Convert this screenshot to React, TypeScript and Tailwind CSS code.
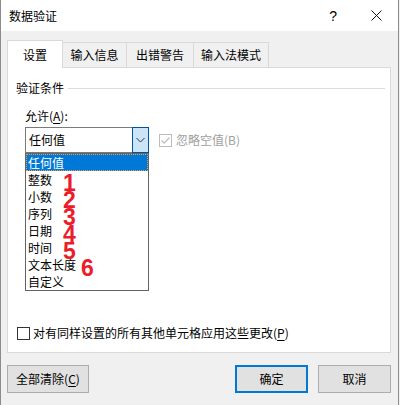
import React from "react";

const items = [
  { label: "任何值", n: "", left: "" },
  { label: "整数", n: "1", left: "left-[37px]" },
  { label: "小数", n: "2", left: "left-[37px]" },
  { label: "序列", n: "3", left: "left-[37px]" },
  { label: "日期", n: "4", left: "left-[37px]" },
  { label: "时间", n: "5", left: "left-[37px]" },
  { label: "文本长度", n: "6", left: "left-[55px]" },
  { label: "自定义", n: "", left: "" },
];

function Check({ disabled }: { disabled?: boolean }) {
  return (
    <div
      className={
        "w-[13px] h-[13px] border bg-white flex items-center justify-center " +
        (disabled ? "border-[#bcbcbc]" : "border-[#333333]")
      }
    >
      {disabled && (
        <svg width="11" height="11" viewBox="0 0 11 11">
          <path d="M1.5 5.5 L4.2 8.2 L9.5 2.5" fill="none" stroke="#bcbcbc" strokeWidth="1.2" />
        </svg>
      )}
    </div>
  );
}

export default function App() {
  return (
    <div className="w-[400px] h-[405px] bg-[#f0f0f0] text-[12px] text-black font-['Noto_Sans_CJK_SC','Noto_Sans',sans-serif]">
      <div className="w-[399px] h-full border-x border-[#8c8c8c] flex flex-col">
        {/* title bar */}
        <div className="h-[31px] bg-white flex items-center pl-[8px] shrink-0">
          <span className="leading-[16px]">数据验证</span>
          <span className="ml-auto mr-[34px] text-[14px] leading-none font-['Liberation_Sans',sans-serif]">?</span>
          <svg width="11" height="11" viewBox="0 0 11 11" className="mr-[16px]">
            <path d="M0.5 0.5 L10.5 10.5 M10.5 0.5 L0.5 10.5" stroke="#111" strokeWidth="1" />
          </svg>
        </div>

        <div className="flex-1 pl-[6px] pt-[9px]">
          {/* tabs */}
          <div className="flex items-end relative z-10 -mb-px">
            <div className="w-[56px] h-[28px] bg-white border-x border-t border-[#d9d9d9] flex items-center justify-center">
              设置
            </div>
            <div className="w-[64px] h-[26px] border-t border-r border-b border-[#d9d9d9] flex items-center justify-center">
              输入信息
            </div>
            <div className="w-[67px] h-[26px] border-t border-r border-b border-[#d9d9d9] flex items-center justify-center">
              出错警告
            </div>
            <div className="w-[75px] h-[26px] border-t border-r border-b border-[#d9d9d9] flex items-center justify-center">
              输入法模式
            </div>
          </div>

          {/* panel */}
          <div className="w-[384px] h-[286px] bg-white border border-[#d9d9d9]">
            <div className="flex items-center h-[16px] mt-[12px] pl-[8px]">
              <span className="leading-[16px]">验证条件</span>
              <div className="flex-1 h-px bg-[#dcdcdc] ml-[4px] mr-[5px]" />
            </div>

            <div className="h-[16px] leading-[16px] mt-[12px] pl-[17px]">
              允许(<span className="underline underline-offset-2">A</span>):
            </div>

            <div className="flex items-center mt-[3px] ml-[17px]">
              <div className="w-[124px] h-[26px] flex">
                <div className="flex-1 border-y border-l border-[#7a7a7a] flex items-center pl-[3px]">
                  任何值
                </div>
                <div className="w-[17px] h-full bg-[#cce4f7] border border-[#005499] flex items-center justify-center">
                  <svg width="9" height="6" viewBox="0 0 9 6">
                    <path d="M0.5 1 L4.5 5 L8.5 1" fill="none" stroke="#333" strokeWidth="1" />
                  </svg>
                </div>
              </div>
              <div className="ml-[10px]">
                <Check disabled />
              </div>
              <span className="ml-[4px] text-[#a0a0a0]">忽略空值(B)</span>
            </div>

            {/* dropdown list */}
            <div className="w-[124px] ml-[17px] border border-[#646464] bg-white">
              {items.map((it, i) => (
                <div
                  key={it.label}
                  className={
                    "relative h-[17px] leading-[17px] pl-[2px] " +
                    (i === 0
                      ? "bg-[#0078d7] text-white outline outline-1 outline-dotted outline-[#f0a040] -outline-offset-1"
                      : "")
                  }
                >
                  {it.label}
                  {it.n && (
                    <span
                      className={
                        "absolute top-[1px] text-[23px] leading-none font-bold text-[#ec1c2a] font-['Liberation_Sans',sans-serif] " +
                        it.left
                      }
                    >
                      {it.n}
                    </span>
                  )}
                </div>
              ))}
            </div>

            <div className="flex items-center mt-[34px] ml-[9px] h-[16px]">
              <Check />
              <span className="ml-[3px] leading-[16px]">
                对有同样设置的所有其他单元格应用这些更改(<span className="underline underline-offset-2">P</span>)
              </span>
            </div>
          </div>

          {/* buttons */}
          <div className="w-[384px] flex mt-[12px]">
            <button className="w-[82px] h-[28px] bg-[#e1e1e1] border border-[#adadad]">
              全部清除(<span className="underline underline-offset-2">C</span>)
            </button>
            <div className="ml-auto flex gap-[10px]">
              <button className="w-[73px] h-[28px] bg-[#e1e1e1] border-2 border-[#0078d7]">确定</button>
              <button className="w-[73px] h-[28px] bg-[#e1e1e1] border border-[#adadad]">取消</button>
            </div>
          </div>
        </div>
      </div>
    </div>
  );
}
